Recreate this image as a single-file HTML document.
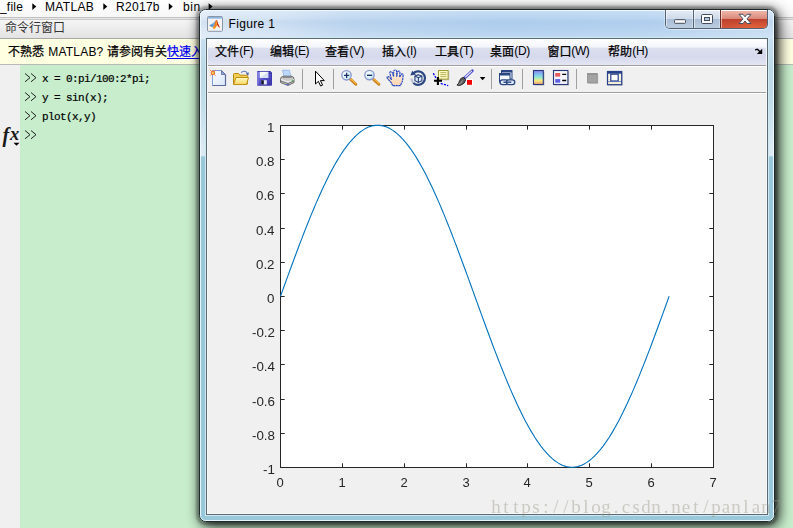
<!DOCTYPE html><html><head><meta charset="utf-8"><title>Figure 1</title><style>
html,body{margin:0;padding:0;}
body{width:793px;height:528px;overflow:hidden;position:relative;background:#c7edcc;font-family:"Liberation Sans",sans-serif;}
.a{position:absolute;}
.t{position:absolute;white-space:pre;line-height:1;color:#000;}
.g{will-change:transform;}
svg{position:absolute;left:0;top:0;overflow:visible;}
</style></head><body><div class="a" style="left:0px;top:0px;width:793px;height:17px;background:linear-gradient(#ffffff,#f7f7f7);"></div>
<div class="a" style="left:0px;top:17px;width:793px;height:1px;background:#c0c0c0;"></div>
<div class="a" style="left:0px;top:18px;width:793px;height:1px;background:#e8e8e8;"></div>
<div class="a" style="left:0px;top:19px;width:793px;height:1px;background:#c8c8c8;"></div>
<div class="a" style="left:0px;top:20px;width:793px;height:18px;background:linear-gradient(#f5f5f5,#e3e3e3);"></div>
<div class="a" style="left:0px;top:38px;width:793px;height:1px;background:#a8a8a8;"></div>
<div class="a" style="left:0px;top:39px;width:793px;height:25px;background:#ffffe1;"></div>
<div class="a" style="left:0px;top:64px;width:793px;height:1px;background:#b9b9b9;"></div>
<div class="a" style="left:0px;top:65px;width:20px;height:463px;background:#f0f0f0;"></div>
<div class="a" style="left:20px;top:65px;width:773px;height:463px;background:#c7edcc;"></div>
<div class="t" style="left:0px;top:1.04px;font-size:12px;letter-spacing:0.2px;">_file</div>
<div class="t" style="left:45px;top:1.04px;font-size:12px;letter-spacing:0.33px;">MATLAB</div>
<div class="t" style="left:116px;top:1.04px;font-size:12px;letter-spacing:0.3px;">R2017b</div>
<div class="t" style="left:183px;top:1.04px;font-size:12px;letter-spacing:0.6px;">bin</div>
<svg width="793" height="528"><path d="M32.3 3.3L36.3 6.6L32.3 9.899999999999999Z" fill="#000"/></svg>
<svg width="793" height="528"><path d="M103.3 3.3L107.3 6.6L103.3 9.899999999999999Z" fill="#000"/></svg>
<svg width="793" height="528"><path d="M168.8 3.3L172.8 6.6L168.8 9.899999999999999Z" fill="#000"/></svg>
<svg width="793" height="528"><path d="M208.6 3.3L212.6 6.6L208.6 9.899999999999999Z" fill="#000"/></svg>
<svg width="793" height="528" style="font-family:'Liberation Sans','Noto Sans CJK SC',sans-serif;font-size:12px;"><text x="5" y="31.6" fill="#333">命令行窗口</text><text x="8" y="55.6" fill="#000" stroke="#000" stroke-width="0.25">不熟悉</text><text x="107" y="55.6" fill="#000" stroke="#000" stroke-width="0.25">请参阅有关</text><text x="167" y="55.6" fill="#0000f0" stroke="#0000f0" stroke-width="0.25">快速入</text></svg>
<div class="a" style="left:167px;top:58px;width:40px;height:1px;background:#0000ee;"></div>
<div class="t" style="left:48.3px;top:46.14px;font-size:12px;letter-spacing:0.2px;">MATLAB?</div>
<div class="t" style="left:42px;top:73.6px;font-size:11px;font-family:'Liberation Mono',monospace;letter-spacing:-0.6px;-webkit-text-stroke:0.2px #000;">x = 0:pi/100:2*pi;</div>
<div class="t" style="left:42px;top:92.6px;font-size:11px;font-family:'Liberation Mono',monospace;letter-spacing:-0.6px;-webkit-text-stroke:0.2px #000;">y = sin(x);</div>
<div class="t" style="left:42px;top:111.6px;font-size:11px;font-family:'Liberation Mono',monospace;letter-spacing:-0.6px;-webkit-text-stroke:0.2px #000;">plot(x,y)</div>
<svg width="793" height="528"><path d="M25 73.5L30 77.7L25 81.8M31 73.5L36 77.7L31 81.8M25 92.5L30 96.7L25 100.8M31 92.5L36 96.7L31 100.8M25 111.5L30 115.7L25 119.8M31 111.5L36 115.7L31 119.8M25 130.5L30 134.7L25 138.8M31 130.5L36 134.7L31 138.8" fill="none" stroke="#222" stroke-width="1"/></svg>
<div class="t" style="left:2.6px;top:125.07px;font-size:20px;font-family:'Liberation Serif',serif;font-style:italic;font-weight:bold;color:#1a1a1a;">f</div>
<div class="t" style="left:10px;top:124.74px;font-size:18.5px;font-family:'Liberation Serif',serif;font-style:italic;font-weight:bold;color:#1a1a1a;">x</div>
<svg width="793" height="528"><path d="M13.500 142.800h6l-3 3z" fill="#000"/></svg>
<div class="a" style="left:199px;top:9px;width:576px;height:513px;border-radius:6.5px;box-shadow:0 0 2px 2.5px rgba(0,0,0,0.21),2.7px 2.7px 14px 0.2px rgba(0,0,0,1);"></div>
<div class="a" id="win" style="left:199px;top:9px;width:576px;height:513px;border-radius:6.5px;box-sizing:border-box;border:1px solid #1e2a2c;overflow:hidden;background:linear-gradient(180deg,#c8def2 0px,#c8def2 28px,#bbd9e5 60px,#c0dde9 92px,#dceaf3 138px,#ddeaf3 145.500px,#98c8da 147px,#98c8da 100%);"><div class="a" style="left:0;top:0;right:0;height:29px;background:linear-gradient(90deg,#dde9f6 0px,#d3e3f4 70px,#bfd7f0 150px,#b3d1ef 300px,#b6d3f0 450px,#c8ddf2 574px);"></div><div class="a" style="left:0;top:0;right:0;height:29px;background:linear-gradient(180deg,rgba(255,255,255,0.28) 0px,rgba(255,255,255,0.05) 8px,rgba(120,160,210,0.10) 12px,rgba(255,255,255,0.0) 20px,rgba(255,255,255,0.18) 29px);"></div><div class="a" style="left:0;top:0;right:0;bottom:0;border-radius:5.5px;border:1px solid rgba(240,250,255,0.9);"></div></div>
<div class="a" style="left:205px;top:37px;width:564px;height:479px;background:#d0e8f0;"></div>
<div class="a" style="left:206px;top:38px;width:562px;height:477px;background:#5a6a74;"></div>
<div class="a" style="left:207px;top:39px;width:560px;height:475px;background:#f8f8f8;"></div>
<div class="a" style="left:208px;top:39px;width:558px;height:26px;background:linear-gradient(#ffffff 0px,#f4f5fb 8px,#dcdfef 9.5px,#d6d9ec 18px,#e4e6f3 26px);"></div>
<div class="a" style="left:208px;top:65px;width:558px;height:1px;background:#a0a0a0;"></div>
<div class="a" style="left:208px;top:66px;width:558px;height:1px;background:#ffffff;"></div>
<div class="a" style="left:208px;top:67px;width:558px;height:25px;background:#f0f0f0;"></div>
<div class="a" style="left:208px;top:92px;width:558px;height:1px;background:#a0a0a0;"></div>
<div class="a" style="left:208px;top:93px;width:558px;height:1px;background:#ffffff;"></div>
<div class="a" style="left:208px;top:94px;width:558px;height:419px;background:#f0f0f0;"></div>
<div class="t" style="left:228.6px;top:18.24px;font-size:12px;letter-spacing:0.32px;">Figure 1</div>
<svg width="793" height="528"><defs><linearGradient id="gml" x1="0" y1="0" x2="0" y2="1"><stop offset="0" stop-color="#e8401a"/><stop offset="0.6" stop-color="#f07a1c"/><stop offset="1" stop-color="#f6c02a"/></linearGradient><linearGradient id="gmb" x1="0" y1="0" x2="1" y2="0"><stop offset="0" stop-color="#3f86cc"/><stop offset="1" stop-color="#7fb6de"/></linearGradient></defs><rect x="207.500" y="16.500" width="15" height="14.800" rx="1" fill="#f3f3f3" stroke="#8a96a8"/><rect x="208" y="17" width="14" height="1.600" fill="#8db4dc"/><path d="M209.200 25.400L213 23.300L215.400 20.700L214.600 25.200L212.600 27.400Z" fill="url(#gmb)"/><path d="M215.800 20.200Q216.500 19.500 217 20.600L218.400 24.500L220 27.900L218.400 26.700L217.100 25.300L215.200 28.400L213.700 29.600L212.700 27.400L214.300 25Z" fill="url(#gml)"/><path d="M217 20.600L218.400 24.500L220 27.900L218.300 26.600L217.300 24.200Z" fill="#b3271c"/><path d="M216.100 20.300L216.700 24L215.700 25.200Z" fill="#f8d428"/></svg>
<div class="a" style="left:665px;top:10px;width:103px;height:19px;border:1px solid #526274;border-top:none;border-radius:0 0 5px 5px;box-sizing:border-box;overflow:hidden;box-shadow:-1px 1px 0 0 rgba(255,255,255,0.3),1px 1px 0 0 rgba(255,255,255,0.3);"><div class="a" style="left:0;top:0;width:27px;height:18px;background:linear-gradient(#ffffff 0,#ffffff 1px,#e2eaf4 1px,#cfdbea 8.500px,#a9bdd6 9px,#bccde0 18px);border-right:1px solid #526274;box-shadow:inset 1px 0 0 rgba(255,255,255,0.55),inset -1px 0 0 rgba(255,255,255,0.35);"></div><div class="a" style="left:28px;top:0;width:26px;height:18px;background:linear-gradient(#ffffff 0,#ffffff 1px,#e2eaf4 1px,#cfdbea 8.500px,#a9bdd6 9px,#bccde0 18px);border-right:1px solid #6a2a20;box-shadow:inset 1px 0 0 rgba(255,255,255,0.55),inset -1px 0 0 rgba(255,255,255,0.35);"></div><div class="a" style="left:55px;top:0;width:47px;height:18px;background:linear-gradient(#ffffff 0,#fff 1px,#f0b6aa 1px,#d98a7c 8.500px,#bc402c 9px,#d4563a 18px);box-shadow:inset 1px 0 0 rgba(255,255,255,0.55),inset -1px 0 0 rgba(255,255,255,0.3);"></div><div class="a" style="left:62px;top:9px;width:40px;height:9px;background:radial-gradient(ellipse at 60% 100%,rgba(240,110,60,0.55),rgba(240,110,60,0) 70%);"></div></div>
<svg width="793" height="528"><rect x="674.5" y="19.700" width="11" height="3.600" rx="0.800" fill="#fbfbfb" stroke="#434d5c"/><rect x="701.5" y="14.500" width="11" height="9" rx="1" fill="#fbfbfb" stroke="#434d5c"/><rect x="704.5" y="17.500" width="5" height="3" fill="#b4c8dc" stroke="#434d5c"/><path d="M739 14.300l4 0 2 2.500 2-2.500 4 0-4 4.600 4 4.600-4 0-2-2.500-2 2.500-4 0 4-4.600z" fill="#fff" stroke="#4a4f5e" stroke-width="1"/></svg>
<div class="t" style="left:239.3px;top:45.44px;font-size:12px;letter-spacing:-0.4px;">(F)</div>
<div class="t" style="left:294.3px;top:45.44px;font-size:12px;letter-spacing:-0.4px;">(E)</div>
<div class="t" style="left:349.3px;top:45.44px;font-size:12px;letter-spacing:-0.4px;">(V)</div>
<div class="t" style="left:406.3px;top:45.44px;font-size:12px;letter-spacing:-0.4px;">(I)</div>
<div class="t" style="left:459.3px;top:45.44px;font-size:12px;letter-spacing:-0.4px;">(T)</div>
<div class="t" style="left:514.3px;top:45.44px;font-size:12px;letter-spacing:-0.4px;">(D)</div>
<div class="t" style="left:571.3px;top:45.44px;font-size:12px;letter-spacing:-0.4px;">(W)</div>
<div class="t" style="left:632.3px;top:45.44px;font-size:12px;letter-spacing:-0.4px;">(H)</div>
<svg width="793" height="528" style="font-family:'Liberation Sans','Noto Sans CJK SC',sans-serif;font-size:12px;"><g fill="#000" stroke="#000" stroke-width="0.25"><text x="215" y="55.6">文件</text><text x="270" y="55.6">编辑</text><text x="325" y="55.6">查看</text><text x="382" y="55.6">插入</text><text x="435" y="55.6">工具</text><text x="490" y="55.6">桌面</text><text x="547.5" y="55.6">窗口</text><text x="608" y="55.6">帮助</text></g></svg>
<svg width="793" height="528"><path d="M762.200 48.800V54.100H756.800Z" fill="#000"/><path d="M755.300 50.300Q756.800 48.500 758.300 50L760.300 52.200" stroke="#000" stroke-width="1.400" fill="none"/></svg>
<div class="a" style="left:302px;top:69px;width:1px;height:20px;background:#a0a0a0;"></div>
<div class="a" style="left:333px;top:69px;width:1px;height:20px;background:#a0a0a0;"></div>
<div class="a" style="left:491px;top:69px;width:1px;height:20px;background:#a0a0a0;"></div>
<div class="a" style="left:522px;top:69px;width:1px;height:20px;background:#a0a0a0;"></div>
<div class="a" style="left:576px;top:69px;width:1px;height:20px;background:#a0a0a0;"></div>
<svg width="793" height="528"><defs><linearGradient id="gpage" x1="0" y1="0" x2="1" y2="1"><stop offset="0" stop-color="#ffffff"/><stop offset="1" stop-color="#d6e4fb"/></linearGradient><linearGradient id="gfold" x1="0" y1="0" x2="0" y2="1"><stop offset="0" stop-color="#fff9c8"/><stop offset="1" stop-color="#f8d660"/></linearGradient><linearGradient id="gsave" x1="0" y1="0" x2="1" y2="1"><stop offset="0" stop-color="#8a8ae6"/><stop offset="0.5" stop-color="#5550cc"/><stop offset="1" stop-color="#3a34a4"/></linearGradient><linearGradient id="gcb" x1="0" y1="0" x2="0" y2="1"><stop offset="0" stop-color="#8a80e8"/><stop offset="0.3" stop-color="#80c8f0"/><stop offset="0.5" stop-color="#98e8d0"/><stop offset="0.72" stop-color="#f4ec80"/><stop offset="1" stop-color="#f09878"/></linearGradient><radialGradient id="glens" cx="0.4" cy="0.4" r="0.7"><stop offset="0" stop-color="#ffffff"/><stop offset="0.6" stop-color="#d4f2f8"/><stop offset="1" stop-color="#a8dcec"/></radialGradient><linearGradient id="ghand" x1="0" y1="0" x2="0" y2="1"><stop offset="0" stop-color="#fff2e0"/><stop offset="1" stop-color="#f8d4b0"/></linearGradient></defs><path d="M212.5 70.500H221.500L225.500 74.500V85.500H212.500Z" fill="url(#gpage)" stroke="#7f9fdc" stroke-width="1"/><path d="M225.500 74.500V85.500H212.500" fill="none" stroke="#5d6a9e" stroke-width="1.2"/><path d="M221.500 70.500V74.500H225.500Z" fill="#8ea2d8" stroke="#5d6a9e" stroke-width="0.8"/><circle cx="212.900" cy="72.900" r="2.300" fill="#ec7a3a"/><circle cx="212.900" cy="72.900" r="1" fill="#f4e060"/><path d="M210.300 70.300l.8.800M214.700 74.700l.8.800M210.300 75.500l.8-.8M214.700 71.100l.8-.8" stroke="#e8622a" stroke-width="1"/><path d="M241.200 72.600C243 70.600 246.300 70.800 247.400 73.600" fill="none" stroke="#5878b0" stroke-width="1.100"/><path d="M246 73.700L248.800 72.300L248.300 75.800Z" fill="#3f5f9e"/><path d="M233.500 84V74.500Q233.500 73.500 234.500 73.500H238.500L240 75.200H246.500Q247.500 75.200 247.500 76.200V84Z" fill="#f3cd54" stroke="#b98a12" stroke-width="1"/><path d="M233.600 84.500L236 77.500H248.500L246.600 84.500Z" fill="url(#gfold)" stroke="#c0900f" stroke-width="1"/><path d="M257.500 71.500H270.500L271.500 72.500V85.200H257.500Z" fill="url(#gsave)" stroke="#3f38ad" stroke-width="1"/><path d="M257.800 71.800V85" stroke="#9c9cec" stroke-width="0.9"/><rect x="259.800" y="71.800" width="8.400" height="6.200" fill="#f6f8ff"/><path d="M268.200 72L259.800 78H268.200Z" fill="#d9dff2"/><rect x="261.200" y="80.200" width="5.600" height="4.200" fill="#e8ebf6"/><rect x="261.200" y="80.200" width="2.600" height="4.200" fill="#14142a"/><rect x="269.300" y="72.600" width="1.200" height="1.400" fill="#262070"/><path d="M282.500 70.300H289.300L291 76.500H284Z" fill="#bcd9fb" stroke="#8fb2e2" stroke-width="0.8"/><path d="M280.500 79Q280.500 76.500 284 76.200H291Q294 76.500 294 79V82.500L288 85.500L280.500 82.500Z" fill="#c9c9c9" stroke="#5c5c5c" stroke-width="0.9"/><path d="M280.800 79.500L288 82L293.800 79.500" fill="none" stroke="#f4f4f4" stroke-width="1"/><path d="M280.800 81L288 83.600L293.800 81" fill="none" stroke="#6a6a6a" stroke-width="0.9"/><path d="M283 77.500H291.500" stroke="#8a8a8a" stroke-width="1"/><circle cx="292.300" cy="80.200" r="0.800" fill="#3cb838"/><path d="M285.500 84.600h3.500" stroke="#5a6ad0" stroke-width="1"/><path d="M315.500 71.200V84L318.400 81.300L320.600 86L322.600 85.100L320.400 80.600H324.300Z" fill="#fff" stroke="#000" stroke-width="1" stroke-linejoin="miter"/><path d="M350.500 79.300L355.800 84.300" stroke="#c27a12" stroke-width="2.900" stroke-linecap="round"/><path d="M350.600 78.700L355.700 83.500" stroke="#f6b245" stroke-width="1.500" stroke-linecap="round"/><circle cx="346.500" cy="75.300" r="4.700" fill="url(#glens)" stroke="#8e94cf" stroke-width="1.300"/><path d="M344 75.400H349.200M346.600 72.800V78" stroke="#1c2c6c" stroke-width="1.300"/><path d="M373.800 79.600L378.900 84.300" stroke="#c27a12" stroke-width="2.900" stroke-linecap="round"/><path d="M373.900 79L378.800 83.500" stroke="#f6b245" stroke-width="1.500" stroke-linecap="round"/><circle cx="369.500" cy="75.100" r="4.700" fill="url(#glens)" stroke="#8e94cf" stroke-width="1.300"/><path d="M367 75.300H372.200" stroke="#1c2c6c" stroke-width="1.400"/><path d="M392.600 85.600L391.200 82.600L387.300 78.300Q386.600 77 387.600 76.600Q388.800 76.400 389.800 77.600L391.400 79.300L389.900 73.200Q389.700 71.700 390.800 71.600Q391.900 71.600 392.300 72.800L393.600 76.600V71.400Q393.800 70 395.200 70Q396.500 70 396.600 71.400L396.800 76.400L397.400 72.200Q397.800 71 398.900 71.100Q400 71.300 399.900 72.600L399.600 77.200L401 75Q401.600 73.700 402.500 74Q403.400 74.400 403.100 75.800L402.600 80.200Q402.300 82 401.300 83.500L400.400 85.600Z" fill="url(#ghand)" stroke="#2546c6" stroke-width="1.150" stroke-linejoin="round" stroke-dasharray="2.200 0.500"/><path d="M413 73.700A6.800 6.800 0 1 1 413.400 83" fill="none" stroke="#2b4682" stroke-width="2.200"/><path d="M413.400 83Q411.600 81 411.500 78.500" fill="none" stroke="#2b4682" stroke-opacity="0.280" stroke-width="2.200"/><path d="M410.400 75.400L412.200 70.800L416.200 74.600Z" fill="#2b4682"/><path d="M418.400 74.700L421.900 76.100V80.700L418.400 82.500L414.900 80.700V76.100Z" fill="#dfeaf8" stroke="#263f78" stroke-width="1.100"/><path d="M414.900 76.100L418.400 77.700L421.900 76.100M418.400 77.700V82.500" fill="none" stroke="#263f78" stroke-width="1.100"/><rect x="439.300" y="71.300" width="10" height="9" fill="#9c9c9c" opacity="0.550"/><rect x="438.500" y="70.500" width="9.600" height="8.600" fill="#fdfdc6" stroke="#a39a32" stroke-width="1"/><path d="M440.300 72.600H446.400M440.300 74.600H446.400M440.300 76.600H446.400" stroke="#b0a850" stroke-width="0.900"/><path d="M433.300 73.200L436 78.200" stroke="#0000ff" stroke-width="1.300" stroke-dasharray="2.200 1.100"/><path d="M440.700 83.400L448.200 85.600" stroke="#0000ff" stroke-width="1.300" stroke-dasharray="2.200 1.100"/><path d="M434 80.800H442M437.900 77V85" stroke="#000" stroke-width="2.100"/><path d="M472.300 70.800L463.800 78.800" stroke="#4040cc" stroke-width="2.800" stroke-linecap="round"/><path d="M471.700 71.200L465.500 77" stroke="#eeeeff" stroke-width="1.100" stroke-linecap="round"/><path d="M463.300 77.300L465.700 79.700Q465.200 83.600 460.800 85.200Q458.300 86 456.900 85Q459 83.800 459.300 81.300Q460.200 78 463.300 77.300Z" fill="#5a5a5a" stroke="#1c1c1c" stroke-width="0.800"/><path d="M458.800 84.300Q461.600 83.300 462.500 80.300" stroke="#a8a8a8" stroke-width="1" fill="none"/><rect x="466.500" y="79.500" width="6" height="5.800" fill="#f00000" stroke="#fff" stroke-width="1"/><path d="M479.800 77H485.400L482.600 80.200Z" fill="#000"/><rect x="501.500" y="70.500" width="10.500" height="8.500" fill="#eaf1fb" stroke="#2b4682" stroke-width="1"/><rect x="501.500" y="70.500" width="10.500" height="2" fill="#2b4682"/><rect x="499.500" y="73.500" width="10.500" height="8.500" fill="#f3f7fd" stroke="#2b4682" stroke-width="1"/><rect x="499.500" y="73.500" width="10.500" height="2" fill="#2b4682"/><rect x="500" y="79.800" width="8.400" height="4.800" rx="2.400" fill="#dfe9f6" stroke="#2b4682" stroke-width="1.300"/><rect x="506.400" y="79.800" width="8.400" height="4.800" rx="2.400" fill="#dfe9f6" stroke="#2b4682" stroke-width="1.300"/><path d="M503.500 82.200H511.300" stroke="#2b4682" stroke-width="1.400"/><rect x="534.500" y="71.500" width="10" height="14" fill="#8a8a8a" opacity="0.450"/><rect x="533.500" y="70.500" width="9.800" height="14" fill="url(#gcb)" stroke="#26397c" stroke-width="1.100"/><rect x="554.500" y="71.500" width="14.600" height="14" fill="#8a8a8a" opacity="0.450"/><rect x="553.500" y="70.500" width="14.400" height="14" fill="#f3f5fa" stroke="#26397c" stroke-width="1.100"/><rect x="555.200" y="73" width="5" height="3.600" fill="#e85c5c"/><rect x="555.200" y="79.100" width="5" height="3.600" fill="#5e5ee6"/><path d="M562.200 74.400H566.200M562.200 80.500H566.200" stroke="#000" stroke-width="1.300"/><rect x="588.200" y="74.200" width="10" height="9.600" fill="#bcbcbc"/><rect x="587.400" y="73.400" width="9.800" height="9.400" fill="#a3a3a3" stroke="#8f8f8f" stroke-width="0.800"/><rect x="587.400" y="73.400" width="9.800" height="1.500" fill="#929292"/><rect x="608.300" y="72.200" width="14.400" height="13.400" fill="#8a8a8a" opacity="0.450"/><rect x="607.500" y="71.500" width="14.200" height="13.200" fill="#f2ecd2" stroke="#27408c" stroke-width="1.200"/><rect x="607.500" y="71.500" width="14.200" height="2.200" fill="#27408c"/><rect x="610.800" y="74.200" width="7.400" height="6.800" fill="#fff" stroke="#27408c" stroke-width="1.200"/><path d="M608.200 81.400H621" stroke="#4a68b8" stroke-width="0.800"/><path d="M609.400 74.500V81M619.900 74.500V81" stroke="#fff" stroke-width="1.200" stroke-dasharray="1 0.800"/></svg>
<svg width="793" height="528"><rect x="280.5" y="125.5" width="433" height="342" fill="#fff" stroke="#262626" stroke-width="1"/><path d="M280.5 467v-3.700M280.5 126v3.700M342.5 467v-3.700M342.5 126v3.700M404.5 467v-3.700M404.5 126v3.700M466.5 467v-3.700M466.5 126v3.700M527.5 467v-3.700M527.5 126v3.700M589.5 467v-3.700M589.5 126v3.700M651.5 467v-3.700M651.5 126v3.700M713.5 467v-3.700M713.5 126v3.700M281 125.5h3.700M713 125.5h-3.700M281 159.5h3.700M713 159.5h-3.700M281 193.5h3.700M713 193.5h-3.700M281 228.5h3.700M713 228.5h-3.700M281 262.5h3.700M713 262.5h-3.700M281 296.5h3.700M713 296.5h-3.700M281 330.5h3.700M713 330.5h-3.700M281 364.5h3.700M713 364.5h-3.700M281 399.5h3.700M713 399.5h-3.700M281 433.5h3.700M713 433.5h-3.700M281 467.5h3.700M713 467.5h-3.700" stroke="#262626" stroke-width="1" fill="none"/><polyline points="280.50,296.25 282.44,290.88 284.39,285.51 286.33,280.16 288.27,274.82 290.22,269.50 292.16,264.21 294.10,258.95 296.05,253.72 297.99,248.54 299.93,243.41 301.88,238.33 303.82,233.30 305.76,228.34 307.71,223.44 309.65,218.62 311.59,213.87 313.54,209.20 315.48,204.62 317.42,200.13 319.37,195.74 321.31,191.44 323.25,187.25 325.20,183.17 327.14,179.19 329.08,175.33 331.03,171.60 332.97,167.98 334.91,164.49 336.86,161.13 338.80,157.91 340.74,154.82 342.69,151.87 344.63,149.06 346.57,146.40 348.52,143.89 350.46,141.52 352.40,139.31 354.35,137.26 356.29,135.36 358.23,133.62 360.18,132.04 362.12,130.62 364.06,129.37 366.01,128.28 367.95,127.36 369.89,126.60 371.84,126.01 373.78,125.59 375.72,125.33 377.66,125.25 379.61,125.33 381.55,125.59 383.49,126.01 385.44,126.60 387.38,127.36 389.32,128.28 391.27,129.37 393.21,130.62 395.15,132.04 397.10,133.62 399.04,135.36 400.98,137.26 402.93,139.31 404.87,141.52 406.81,143.89 408.76,146.40 410.70,149.06 412.64,151.87 414.59,154.82 416.53,157.91 418.47,161.13 420.42,164.49 422.36,167.98 424.30,171.60 426.25,175.33 428.19,179.19 430.13,183.17 432.08,187.25 434.02,191.44 435.96,195.74 437.91,200.13 439.85,204.62 441.79,209.20 443.74,213.87 445.68,218.62 447.62,223.44 449.57,228.34 451.51,233.30 453.45,238.33 455.40,243.41 457.34,248.54 459.28,253.72 461.23,258.95 463.17,264.21 465.11,269.50 467.06,274.82 469.00,280.16 470.94,285.51 472.89,290.88 474.83,296.25 476.77,301.62 478.72,306.99 480.66,312.34 482.60,317.68 484.55,323.00 486.49,328.29 488.43,333.55 490.38,338.78 492.32,343.96 494.26,349.09 496.21,354.17 498.15,359.20 500.09,364.16 502.04,369.06 503.98,373.88 505.92,378.63 507.87,383.30 509.81,387.88 511.75,392.37 513.70,396.76 515.64,401.06 517.58,405.25 519.53,409.33 521.47,413.31 523.41,417.17 525.36,420.90 527.30,424.52 529.24,428.01 531.19,431.37 533.13,434.59 535.07,437.68 537.02,440.63 538.96,443.44 540.90,446.10 542.85,448.61 544.79,450.98 546.73,453.19 548.68,455.24 550.62,457.14 552.56,458.88 554.51,460.46 556.45,461.88 558.39,463.13 560.34,464.22 562.28,465.14 564.22,465.90 566.17,466.49 568.11,466.91 570.05,467.17 571.99,467.25 573.94,467.17 575.88,466.91 577.82,466.49 579.77,465.90 581.71,465.14 583.65,464.22 585.60,463.13 587.54,461.88 589.48,460.46 591.43,458.88 593.37,457.14 595.31,455.24 597.26,453.19 599.20,450.98 601.14,448.61 603.09,446.10 605.03,443.44 606.97,440.63 608.92,437.68 610.86,434.59 612.80,431.37 614.75,428.01 616.69,424.52 618.63,420.90 620.58,417.17 622.52,413.31 624.46,409.33 626.41,405.25 628.35,401.06 630.29,396.76 632.24,392.37 634.18,387.88 636.12,383.30 638.07,378.63 640.01,373.88 641.95,369.06 643.90,364.16 645.84,359.20 647.78,354.17 649.73,349.09 651.67,343.96 653.61,338.78 655.56,333.55 657.50,328.29 659.44,323.00 661.39,317.68 663.33,312.34 665.27,306.99 667.22,301.62 669.16,296.25" fill="none" stroke="#0072bd" stroke-width="1.1" stroke-linejoin="round"/></svg>
<div class="t g" style="right:518.4px;top:120.5px;font-size:13.33px;color:#262626;">1</div>
<div class="t g" style="right:518.4px;top:154.5px;font-size:13.33px;color:#262626;">0.8</div>
<div class="t g" style="right:518.4px;top:188.5px;font-size:13.33px;color:#262626;">0.6</div>
<div class="t g" style="right:518.4px;top:223.5px;font-size:13.33px;color:#262626;">0.4</div>
<div class="t g" style="right:518.4px;top:257.5px;font-size:13.33px;color:#262626;">0.2</div>
<div class="t g" style="right:518.4px;top:291.5px;font-size:13.33px;color:#262626;">0</div>
<div class="t g" style="right:518.4px;top:325.5px;font-size:13.33px;color:#262626;">-0.2</div>
<div class="t g" style="right:518.4px;top:359.5px;font-size:13.33px;color:#262626;">-0.4</div>
<div class="t g" style="right:518.4px;top:394.5px;font-size:13.33px;color:#262626;">-0.6</div>
<div class="t g" style="right:518.4px;top:428.5px;font-size:13.33px;color:#262626;">-0.8</div>
<div class="t g" style="right:518.4px;top:462.5px;font-size:13.33px;color:#262626;">-1</div>
<div class="t g" style="left:259.5px;width:40px;text-align:center;top:476px;font-size:13px;color:#262626;">0</div>
<div class="t g" style="left:321.5px;width:40px;text-align:center;top:476px;font-size:13px;color:#262626;">1</div>
<div class="t g" style="left:383.5px;width:40px;text-align:center;top:476px;font-size:13px;color:#262626;">2</div>
<div class="t g" style="left:445.5px;width:40px;text-align:center;top:476px;font-size:13px;color:#262626;">3</div>
<div class="t g" style="left:506.5px;width:40px;text-align:center;top:476px;font-size:13px;color:#262626;">4</div>
<div class="t g" style="left:568.5px;width:40px;text-align:center;top:476px;font-size:13px;color:#262626;">5</div>
<div class="t g" style="left:630.5px;width:40px;text-align:center;top:476px;font-size:13px;color:#262626;">6</div>
<div class="t g" style="left:692.5px;width:40px;text-align:center;top:476px;font-size:13px;color:#262626;">7</div>
<div class="t g" style="left:491px;top:497.32px;font-size:19px;font-family:'Liberation Serif',serif;color:rgba(150,147,130,0.42);"><span style="display:inline-block;width:10px;text-align:center;">h</span><span style="display:inline-block;width:10px;text-align:center;">t</span><span style="display:inline-block;width:10px;text-align:center;">t</span><span style="display:inline-block;width:10px;text-align:center;">p</span><span style="display:inline-block;width:10px;text-align:center;">s</span><span style="display:inline-block;width:10px;text-align:center;">:</span><span style="display:inline-block;width:10px;text-align:center;">/</span><span style="display:inline-block;width:10px;text-align:center;">/</span><span style="display:inline-block;width:10px;text-align:center;">b</span><span style="display:inline-block;width:10px;text-align:center;">l</span><span style="display:inline-block;width:10px;text-align:center;">o</span><span style="display:inline-block;width:10px;text-align:center;">g</span><span style="display:inline-block;width:10px;text-align:center;">.</span><span style="display:inline-block;width:10px;text-align:center;">c</span><span style="display:inline-block;width:10px;text-align:center;">s</span><span style="display:inline-block;width:10px;text-align:center;">d</span><span style="display:inline-block;width:10px;text-align:center;">n</span><span style="display:inline-block;width:10px;text-align:center;">.</span><span style="display:inline-block;width:10px;text-align:center;">n</span><span style="display:inline-block;width:10px;text-align:center;">e</span><span style="display:inline-block;width:10px;text-align:center;">t</span><span style="display:inline-block;width:10px;text-align:center;">/</span><span style="display:inline-block;width:10px;text-align:center;">p</span><span style="display:inline-block;width:10px;text-align:center;">a</span><span style="display:inline-block;width:10px;text-align:center;">n</span><span style="display:inline-block;width:10px;text-align:center;">l</span><span style="display:inline-block;width:10px;text-align:center;">a</span><span style="display:inline-block;width:10px;text-align:center;">n</span><span style="display:inline-block;width:10px;text-align:center;">7</span></div></body></html>
